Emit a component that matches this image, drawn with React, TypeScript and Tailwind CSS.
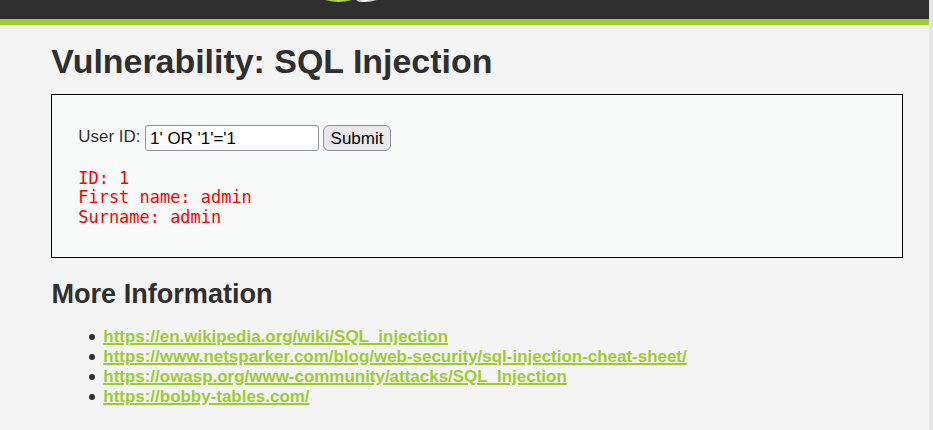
const links = [
  'https://en.wikipedia.org/wiki/SQL_injection',
  'https://www.netsparker.com/blog/web-security/sql-injection-cheat-sheet/',
  'https://owasp.org/www-community/attacks/SQL_Injection',
  'https://bobby-tables.com/',
];

function Logo() {
  return (
    <svg className="ml-[320px] block h-[19px] w-[64px]" viewBox="0 0 64 19" aria-hidden="true">
      <defs>
        <linearGradient id="green" x1="0" x2="1">
          <stop offset="0" stopColor="#7fa32f" />
          <stop offset="0.5" stopColor="#b4da5c" />
          <stop offset="1" stopColor="#84a838" />
        </linearGradient>
        <linearGradient id="silver" x1="0" x2="1">
          <stop offset="0" stopColor="#b5b5b5" />
          <stop offset="0.4" stopColor="#ffffff" />
          <stop offset="1" stopColor="#8a8a8a" />
        </linearGradient>
      </defs>
      <path d="M2 -1 Q18.500 5 35 -1 Z" fill="url(#green)" />
      <path d="M36 0.500 Q38.500 2 43 2 Q53 2 60 -1 L37 -1 Q37.500 0.500 36 0.500 Z" fill="url(#silver)" />
    </svg>
  );
}

export default function App() {
  return (
    <div className="flex h-[430px] w-[933px] overflow-hidden bg-[#e5e5e5] font-['Liberation_Sans',Arial,sans-serif] text-[16.97px] leading-[20px] text-[#2f2f2f]">
      <div className="w-[929px] bg-[#f4f4f4]">
        <header className="h-[25px] border-b-[6px] border-[#a1cc33] bg-[#2f2f2f]">
          <Logo />
        </header>
        <main className="ml-[51px] w-[852px]">
          <h1 className="pt-[16px] pl-[0.3px] text-[33.94px] leading-[40px] font-bold">Vulnerability: SQL Injection</h1>
          <section className="mt-[13px] h-[164px] border border-black bg-[#f8fafa] pt-[30px] pl-[26px]">
            <form className="flex h-[26px]" onSubmit={(e) => e.preventDefault()}>
              <label htmlFor="uid" className="mr-[5px] w-[62px] pt-[2px] pl-[0.3px] whitespace-nowrap">User ID:</label>
              <input
                id="uid"
                type="text"
                defaultValue="1' OR '1'='1"
                className="h-[26px] w-[174px] rounded-[3px] border border-[#8f8f9d] bg-white px-[4px] pt-[2px] text-black"
              />
              <button className="ml-[4px] h-[26px] w-[68px] rounded-[6px] border border-[#8f8f9d] bg-[#e9e9ed] pt-[2px] text-black">
                Submit
              </button>
            </form>
            <pre className="mt-[18px] pl-[0.3px] font-['DejaVu_Sans_Mono',monospace] text-[16.97px] leading-[19.400px] text-[#ff0000]">
              {'ID: 1\nFirst name: admin\nSurname: admin'}
            </pre>
          </section>
          <h2 className="mt-[20px] pl-[0.4px] text-[27.1px] leading-[32px] font-bold">More Information</h2>
          <ul className="mt-[17px] pl-[38px]">
            {links.map((href) => (
              <li key={href} className="flex items-center">
                <span className="mr-[8px] size-[6px] rounded-full bg-[#2f2f2f]" />
                <a href={href} className="pl-[0.3px] font-bold text-[#9acd32] underline decoration-2">{href}</a>
              </li>
            ))}
          </ul>
        </main>
      </div>
    </div>
  );
}
